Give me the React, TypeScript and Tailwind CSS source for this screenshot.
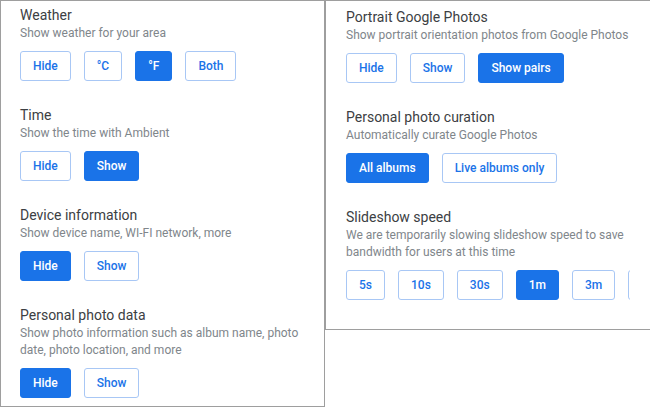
type Opt = { label: string; on?: boolean };
type Setting = { title: string; desc: string; options: Opt[] };

const left: Setting[] = [
  {
    title: "Weather",
    desc: "Show weather for your area",
    options: [{ label: "Hide" }, { label: "°C" }, { label: "°F", on: true }, { label: "Both" }],
  },
  {
    title: "Time",
    desc: "Show the time with Ambient",
    options: [{ label: "Hide" }, { label: "Show", on: true }],
  },
  {
    title: "Device information",
    desc: "Show device name, WI-FI network, more",
    options: [{ label: "Hide", on: true }, { label: "Show" }],
  },
  {
    title: "Personal photo data",
    desc: "Show photo information such as album name, photo date, photo location, and more",
    options: [{ label: "Hide", on: true }, { label: "Show" }],
  },
];

const right: Setting[] = [
  {
    title: "Portrait Google Photos",
    desc: "Show portrait orientation photos from Google Photos",
    options: [{ label: "Hide" }, { label: "Show" }, { label: "Show pairs", on: true }],
  },
  {
    title: "Personal photo curation",
    desc: "Automatically curate Google Photos",
    options: [{ label: "All albums", on: true }, { label: "Live albums only" }],
  },
  {
    title: "Slideshow speed",
    desc: "We are temporarily slowing slideshow speed to save bandwidth for users at this time",
    options: [
      { label: "5s" },
      { label: "10s" },
      { label: "30s" },
      { label: "1m", on: true },
      { label: "3m" },
      { label: "5m" },
    ],
  },
];

function Section({ s }: { s: Setting }) {
  return (
    <div className="pb-6">
      <div className="text-[14px] leading-5 text-[#3c4043]">{s.title}</div>
      <div className="text-[12px] leading-[17px] text-[#80868b]">{s.desc}</div>
      <div className="mt-[9px] flex w-full min-w-0 gap-[13px] overflow-hidden">
        {s.options.map((o) => (
          <button
            key={o.label}
            className={
              o.on
                ? "h-[30px] shrink-0 rounded-[3px] border border-[#1a73e8] bg-[#1a73e8] px-3 text-[12px] font-medium text-white"
                : "h-[30px] shrink-0 rounded-[3px] border border-[#a8c7f5] bg-white px-3 text-[12px] font-medium text-[#1a73e8]"
            }
          >
            {o.label}
          </button>
        ))}
      </div>
    </div>
  );
}

export default function App() {
  return (
    <div className="flex h-[407px] w-[650px] items-start overflow-hidden bg-white font-['Roboto',sans-serif]">
      <div className="h-[407px] w-[325px] shrink-0 border border-[#9e9e9e] pl-[19px] pr-4 pt-1">
        {left.map((s) => (
          <Section key={s.title} s={s} />
        ))}
      </div>
      <div className="h-[330px] w-[325px] min-w-0 shrink-0 border-y border-l border-[#9e9e9e] pl-5 pr-5 pt-[6px]">
        {right.map((s) => (
          <Section key={s.title} s={s} />
        ))}
      </div>
    </div>
  );
}
